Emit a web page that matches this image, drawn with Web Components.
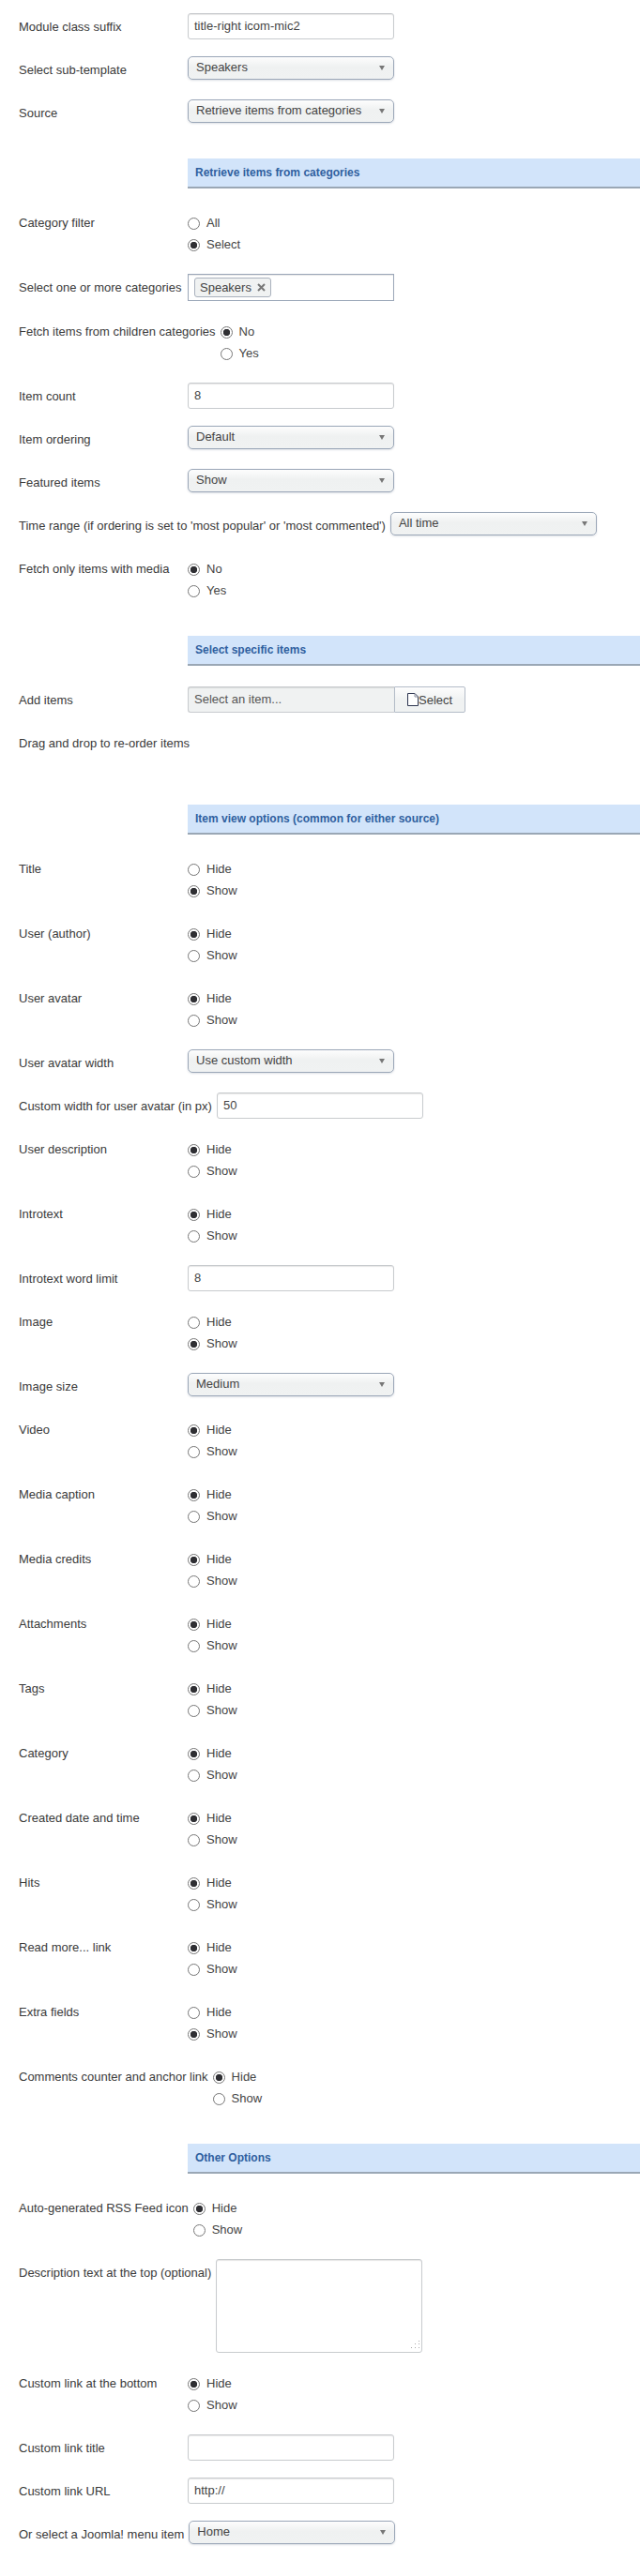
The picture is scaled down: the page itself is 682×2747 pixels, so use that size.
<!DOCTYPE html>
<html>
<head>
<meta charset="utf-8">
<title>Module options</title>
<style>
  body { margin: 0; padding: 14px 0 0; background: #fff; font: 13px/17px "Liberation Sans", Arial, sans-serif; color: #333; min-height: 2733px; }
</style>
</head>
<body>
<option-form>
  <form-row label="Module class suffix"><text-field value="title-right icom-mic2"></text-field></form-row>
  <form-row label="Select sub-template"><select-field value="Speakers"></select-field></form-row>
  <form-row label="Source"><select-field value="Retrieve items from categories"></select-field></form-row>

  <section-head>Retrieve items from categories</section-head>
  <form-row label="Category filter"><radio-group options="All,Select" checked="Select"></radio-group></form-row>
  <form-row label="Select one or more categories"><tag-field value="Speakers"></tag-field></form-row>
  <form-row label="Fetch items from children categories"><radio-group options="No,Yes" checked="No"></radio-group></form-row>
  <form-row label="Item count"><text-field value="8"></text-field></form-row>
  <form-row label="Item ordering"><select-field value="Default"></select-field></form-row>
  <form-row label="Featured items"><select-field value="Show"></select-field></form-row>
  <form-row label="Time range (if ordering is set to 'most popular' or 'most commented')"><select-field value="All time"></select-field></form-row>
  <form-row label="Fetch only items with media"><radio-group options="No,Yes" checked="No"></radio-group></form-row>

  <section-head>Select specific items</section-head>
  <form-row label="Add items"><item-picker placeholder="Select an item..."></item-picker></form-row>
  <form-row label="Drag and drop to re-order items" tall></form-row>

  <section-head>Item view options (common for either source)</section-head>
  <form-row label="Title"><radio-group checked="Show"></radio-group></form-row>
  <form-row label="User (author)"><radio-group></radio-group></form-row>
  <form-row label="User avatar"><radio-group></radio-group></form-row>
  <form-row label="User avatar width"><select-field value="Use custom width"></select-field></form-row>
  <form-row label="Custom width for user avatar (in px)"><text-field value="50"></text-field></form-row>
  <form-row label="User description"><radio-group></radio-group></form-row>
  <form-row label="Introtext"><radio-group></radio-group></form-row>
  <form-row label="Introtext word limit"><text-field value="8"></text-field></form-row>
  <form-row label="Image"><radio-group checked="Show"></radio-group></form-row>
  <form-row label="Image size"><select-field value="Medium"></select-field></form-row>
  <form-row label="Video"><radio-group></radio-group></form-row>
  <form-row label="Media caption"><radio-group></radio-group></form-row>
  <form-row label="Media credits"><radio-group></radio-group></form-row>
  <form-row label="Attachments"><radio-group></radio-group></form-row>
  <form-row label="Tags"><radio-group></radio-group></form-row>
  <form-row label="Category"><radio-group></radio-group></form-row>
  <form-row label="Created date and time"><radio-group></radio-group></form-row>
  <form-row label="Hits"><radio-group></radio-group></form-row>
  <form-row label="Read more... link"><radio-group></radio-group></form-row>
  <form-row label="Extra fields"><radio-group checked="Show"></radio-group></form-row>
  <form-row label="Comments counter and anchor link"><radio-group></radio-group></form-row>

  <section-head>Other Options</section-head>
  <form-row label="Auto-generated RSS Feed icon"><radio-group></radio-group></form-row>
  <form-row label="Description text at the top (optional)"><text-area></text-area></form-row>
  <form-row label="Custom link at the bottom"><radio-group></radio-group></form-row>
  <form-row label="Custom link title"><text-field></text-field></form-row>
  <form-row label="Custom link URL"><text-field value="http://"></text-field></form-row>
  <form-row label="Or select a Joomla! menu item"><select-field value="Home"></select-field></form-row>
</option-form>

<script>
// small base class, every element just writes its shadow root once
class BaseField extends HTMLElement {
  constructor() {
    super();
    this.attachShadow({ mode: 'open' });
  }
  connectedCallback() {
    this.shadowRoot.innerHTML = this.render();
  }
  attr(name, fallback = '') {
    return this.hasAttribute(name) ? this.getAttribute(name) : fallback;
  }
}

class OptionForm extends BaseField {
  render() {
    return `<style>:host { display: block; }</style><slot></slot>`;
  }
}

class FormRow extends BaseField {
  render() {
    return `
    <style>
      :host { display: flex; align-items: flex-start; gap: 5px; padding-left: 20px; margin-bottom: 18px; }
      :host([tall]) { height: 45px; }
      .label { min-width: 175px; padding-top: 6px; line-height: 17px; color: #3a3a3a; white-space: nowrap; }
    </style>
    <div class="label">${this.attr('label')}</div>
    <slot></slot>`;
  }
}

class SectionHead extends BaseField {
  render() {
    return `
    <style>
      /* row margin collapses into the top margin, so 35 = 18 + 17 */
      :host { display: block; box-sizing: border-box; height: 32px; margin: 35px 0 22px 200px; padding: 7px 0 0 8px;
        background: #d2e4fa; border-bottom: 2px solid #9aa7b5; color: #2f5f9f; font-weight: bold; font-size: 12px; line-height: 17px; }
    </style>
    <slot></slot>`;
  }
}

class TextField extends BaseField {
  render() {
    return `
    <style>
      :host { display: block; box-sizing: border-box; width: 220px; height: 28px; padding: 0 6px; border: 1px solid #c8cbce; border-radius: 3px;
        box-shadow: inset 0 1px 1px rgba(0,0,0,.1); line-height: 26px; color: #444; background: #fff; }
    </style>
    <div role="textbox">${this.attr('value')}</div>`;
  }
}

class SelectField extends BaseField {
  render() {
    return `
    <style>
      :host { display: block; box-sizing: border-box; position: relative; width: 220px; height: 25px; margin-bottom: 3px; padding: 0 26px 0 8px;
        border: 1px solid #9ba7b8; border-radius: 5px; background: linear-gradient(#fdfdfd, #eff1f1 45%, #f0f2f2);
        box-shadow: 0 1px 2px rgba(120,130,150,.25); line-height: 22px; color: #444; }
      .arrow { position: absolute; right: 9px; top: 9px; width: 0; height: 0; border: 3.5px solid transparent; border-bottom: 0; border-top: 5px solid #777; }
    </style>
    <div role="combobox">${this.attr('value')}</div>
    <span class="arrow"></span>`;
  }
}

class RadioGroup extends BaseField {
  render() {
    const options = this.attr('options', 'Hide,Show').split(',');
    const checked = this.attr('checked', options[0]);
    const items = options.map(opt => `
      <label><input type="radio" ${opt === checked ? 'checked' : ''}><span>${opt}</span></label>`).join('');
    return `
    <style>
      :host { display: block; height: 51px; padding-top: 3px; box-sizing: border-box; }
      label { display: flex; align-items: flex-start; height: 23px; gap: 7px; line-height: 17px; color: #444; padding-top: 3px; box-sizing: border-box; }
      input { appearance: none; box-sizing: border-box; width: 13px; height: 13px; margin: 3px 0 0; border: 1px solid #767676; border-radius: 50%; background: #fff; }
      input:checked { background: radial-gradient(circle, #2f2f33 0 3.4px, #fff 4px); }
    </style>
    ${items}`;
  }
}

class TagField extends BaseField {
  render() {
    return `
    <style>
      :host { display: block; box-sizing: border-box; width: 220px; height: 29px; padding: 3px 6px; border: 1px solid #9ba7b8;
        box-shadow: inset 0 1px 1px rgba(0,0,0,.1); }
      .tag { display: inline-flex; align-items: center; box-sizing: border-box; height: 21px; padding: 0 5px; gap: 6px; border: 1px solid #a9b1bd; border-radius: 3px;
        background: #f0f2f2; color: #444; }
      svg { display: block; }
    </style>
    <span class="tag">${this.attr('value')}
      <svg width="9" height="9" viewBox="0 0 9 9"><path d="M1 1l7 7M8 1l-7 7" stroke="#777" stroke-width="2"/></svg>
    </span>`;
  }
}

class ItemPicker extends BaseField {
  render() {
    return `
    <style>
      :host { display: flex; height: 28px; }
      .field { box-sizing: border-box; width: 220px; height: 28px; padding: 0 6px; border: 1px solid #c8cbce; border-right: 0; border-radius: 3px 0 0 3px;
        background: #f0f2f2; box-shadow: inset 0 1px 1px rgba(0,0,0,.1); line-height: 26px; color: #555; }
      .btn { display: flex; align-items: center; box-sizing: border-box; width: 76px; height: 28px; padding-left: 13px; border: 1px solid #b4bcc8; border-radius: 0 2px 2px 0;
        background: linear-gradient(#fdfdfd, #f0f2f2 50%); color: #444; }
      svg { display: block; }
    </style>
    <div class="field">${this.attr('placeholder')}</div>
    <div class="btn">
      <svg width="12" height="14" viewBox="0 0 12 14"><path d="M.5.5h7.5l3.5 3.5v9.5h-11z" fill="#fff" stroke="#2d3550"/><path d="M8 .5v3.5h3.5" fill="none" stroke="#8a90a0"/></svg>Select
    </div>`;
  }
}

class TextArea extends BaseField {
  render() {
    return `
    <style>
      :host { display: block; position: relative; box-sizing: border-box; width: 220px; height: 100px; border: 1px solid #c8cbce; border-radius: 3px;
        box-shadow: inset 0 1px 1px rgba(0,0,0,.1); }
      svg { position: absolute; right: 0; bottom: 1px; }
    </style>
    <svg width="12" height="12" viewBox="0 0 12 12" fill="#aaa"><rect x="9" y="1" width="1" height="1"/><rect x="9" y="4" width="1" height="1"/><rect x="5" y="4" width="1" height="1"/><rect x="9" y="8" width="1" height="1"/><rect x="5" y="8" width="1" height="1"/><rect x="1" y="8" width="1" height="1"/></svg>`;
  }
}

customElements.define('option-form', OptionForm);
customElements.define('form-row', FormRow);
customElements.define('section-head', SectionHead);
customElements.define('text-field', TextField);
customElements.define('select-field', SelectField);
customElements.define('radio-group', RadioGroup);
customElements.define('tag-field', TagField);
customElements.define('item-picker', ItemPicker);
customElements.define('text-area', TextArea);
</script>
</body>
</html>
